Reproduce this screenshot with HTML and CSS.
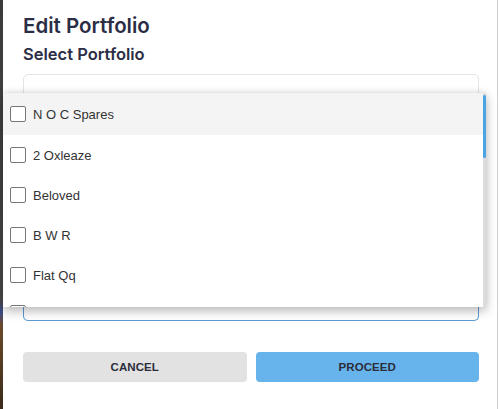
FILE: index.html
```html
<!DOCTYPE html>
<html>
<head>
<meta charset="utf-8">
<link rel="stylesheet" href="styles.css">
</head>
<body>
<div class="page">
  <div class="backdrop-strip"></div>
  <div class="modal">
    <h1 class="title">Edit Portfolio</h1>
    <h2 class="subtitle">Select Portfolio</h2>
    <div class="select-box"></div>
    <div class="actions">
      <button class="btn btn-cancel">CANCEL</button>
      <button class="btn btn-proceed">PROCEED</button>
    </div>
  </div>
  <div class="edge-line"></div>
  <div class="edge-white"></div>

  <div class="dropdown">
    <ul class="options">
      <li class="option active"><span class="check"></span><span class="label">N O C Spares</span></li>
      <li class="option"><span class="check"></span><span class="label">2 Oxleaze</span></li>
      <li class="option"><span class="check"></span><span class="label">Beloved</span></li>
      <li class="option"><span class="check"></span><span class="label">B W R</span></li>
      <li class="option"><span class="check"></span><span class="label">Flat Qq</span></li>
      <li class="option option-partial"><span class="check"></span></li>
    </ul>
    <div class="scrollbar"><div class="thumb"></div></div>
  </div>
</div>
</body>
</html>
```
FILE: styles.css
```css
html, body {
  margin: 0;
  padding: 0;
  background: #ffffff;
}
.page {
  position: relative;
  display: flex;
  width: 500px;
  height: 409px;
  overflow: hidden;
}
.backdrop-strip {
  width: 3px;
  flex: none;
  background: linear-gradient(#3a3a3a 0, #4a4a4a 300px, #3b4a8a 312px, #6a4a2a 325px, #3a2a1a 409px);
}
.modal {
  flex: 1;
  background: #ffffff;
  padding: 0 18px 0 20px;
  font-family: Inter, "Noto Sans", sans-serif;
}
.edge-line {
  width: 1px;
  flex: none;
  background: #cfcfcf;
}
.edge-white {
  width: 2px;
  flex: none;
  background: #ffffff;
}
.title {
  margin: 12px 0 0;
  font-size: 20.5px;
  line-height: 28px;
  font-weight: 600;
  color: #2b2e45;
}
.subtitle {
  margin: 3px 0 0;
  font-size: 16.5px;
  line-height: 22px;
  font-weight: 600;
  color: #2b2e45;
}
.select-box {
  position: relative;
  margin-top: 9px;
  height: 245px;
  border: 1px solid #e4e4e4;
  border-radius: 5px;
}
.select-box::after {
  content: "";
  position: absolute;
  left: -1px;
  right: -1px;
  bottom: -1px;
  height: 20px;
  border: 1.5px solid #5d9ad6;
  border-top: none;
  border-radius: 0 0 5px 5px;
}
.actions {
  display: flex;
  gap: 9px;
  margin-top: 31px;
}
.btn {
  flex: 1;
  height: 30px;
  border: none;
  border-radius: 4px;
  font-family: "Liberation Sans", Arial, sans-serif;
  font-weight: 700;
  font-size: 11.5px;
  letter-spacing: 0.1px;
  color: #2b2d3a;
  padding: 0;
}
.btn-cancel {
  background: #e2e2e2;
}
.btn-proceed {
  background: #67b4ec;
}
.dropdown {
  position: absolute;
  left: 3px;
  top: 93px;
  width: 483px;
  height: 214px;
  display: flex;
  background: #ffffff;
  box-shadow: 0 4px 10px rgba(0, 0, 0, 0.28), 0 -2px 6px rgba(0, 0, 0, 0.06);
  overflow: hidden;
}
.options {
  flex: 1;
  list-style: none;
  margin: 0;
  padding: 0;
  font-family: "Liberation Sans", Arial, sans-serif;
  font-size: 13px;
  color: #333333;
}
.option {
  display: flex;
  align-items: center;
  height: 40px;
  padding-left: 7px;
  gap: 7px;
}
.option.active {
  background: #f4f4f4;
  height: 42px;
}
.option.option-partial {
  align-items: flex-start;
  padding-top: 10px;
  box-sizing: border-box;
}
.check {
  width: 14px;
  height: 14px;
  border: 1.5px solid #767676;
  border-radius: 2px;
  flex: none;
  background: #ffffff;
}
.scrollbar {
  width: 3px;
  flex: none;
  background: #dcdcdc;
}
.thumb {
  margin-top: 2px;
  height: 63px;
  background: #4aa3e3;
  border-radius: 2px;
}
```
